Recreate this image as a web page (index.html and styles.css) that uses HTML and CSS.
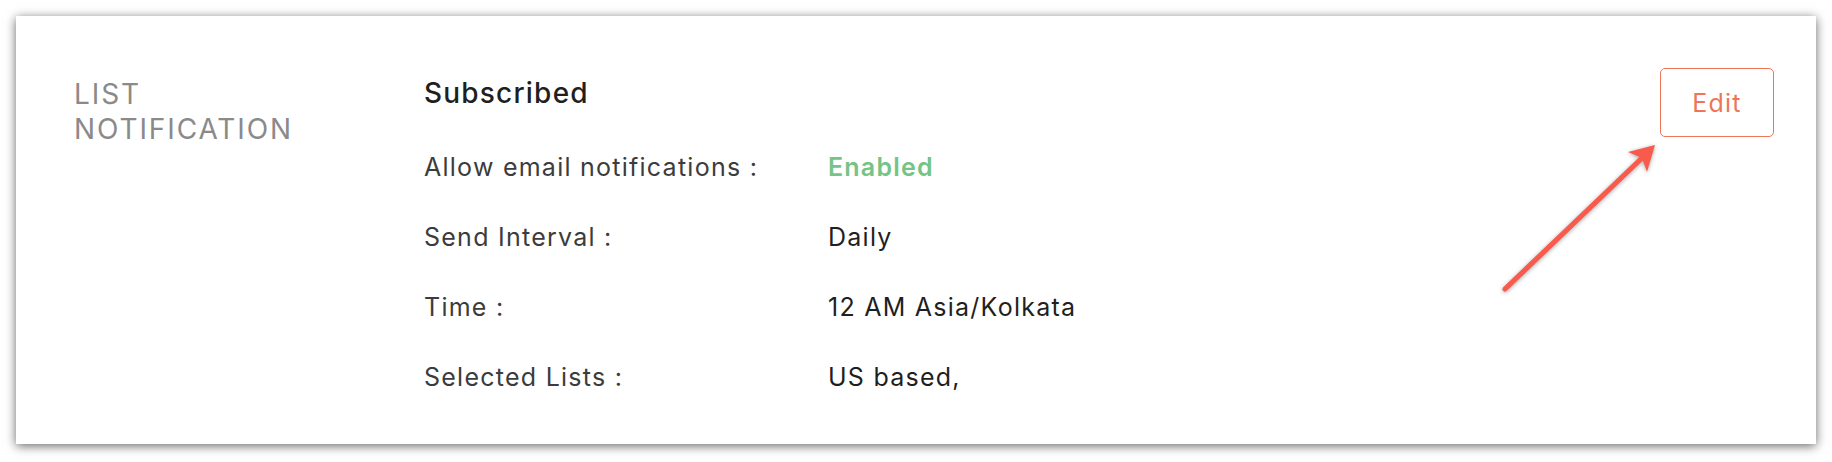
FILE: index.html
```html
<!DOCTYPE html>
<html lang="en">
<head>
<meta charset="utf-8">
<title>List Notification</title>
<link rel="stylesheet" href="styles.css">
</head>
<body>
<section class="card">
  <div class="section-title">LIST<br>NOTIFICATION</div>
  <div class="details">
    <h3 class="details-heading">Subscribed</h3>
    <dl class="rows">
      <dt class="row-label">Allow email notifications :</dt>
      <dd class="row-value enabled">Enabled</dd>
      <dt class="row-label">Send Interval :</dt>
      <dd class="row-value">Daily</dd>
      <dt class="row-label">Time :</dt>
      <dd class="row-value">12 AM Asia/Kolkata</dd>
      <dt class="row-label">Selected Lists :</dt>
      <dd class="row-value">US based,</dd>
    </dl>
  </div>
  <button class="edit-btn" type="button">Edit</button>
  <svg class="arrow" width="170" height="170" viewBox="0 0 170 170" aria-hidden="true">
    <line x1="9" y1="153" x2="146" y2="22" stroke="#f85a4b" stroke-width="5" stroke-linecap="round"/>
    <path d="M159 9 L132 16 L146 22 L151 36 Z" fill="#f85a4b"/>
  </svg>
</section>
</body>
</html>
```

FILE: styles.css
```css
* { box-sizing: border-box; }

html, body {
  margin: 0;
  padding: 0;
  background: #ffffff;
}

body {
  padding: 16px 16px 18px 16px;
  font-family: "Inter", "Liberation Sans", sans-serif;
}

.card {
  position: relative;
  display: flex;
  align-items: flex-start;
  background: #ffffff;
  height: 428px;
  padding: 52px 42px 32px 58px;
  box-shadow: 0 2px 10px rgba(0, 0, 0, 0.6);
}

.section-title {
  width: 350px;
  flex: none;
  padding-top: 9px;
  font-size: 28px;
  line-height: 35px;
  color: #8a8a8a;
  letter-spacing: 1.9px;
}

.details {
  flex: 1;
  padding-top: 8px;
}

.details-heading {
  margin: 0 0 21px 0;
  font-size: 28px;
  line-height: 35px;
  font-weight: 500;
  color: #1f1f1f;
  letter-spacing: 1.2px;
}

.rows {
  margin: 0;
  display: grid;
  grid-template-columns: 404px auto;
  grid-auto-rows: 70px;
  align-items: center;
  font-size: 25px;
  letter-spacing: 1.25px;
}

.row-label {
  color: #3c3c3c;
}

.row-value {
  margin: 0;
  color: #1f1f1f;
}

.row-value.enabled {
  color: #74c486;
  font-weight: 600;
  letter-spacing: 1.2px;
}

.edit-btn {
  flex: none;
  width: 114px;
  height: 69px;
  border: 1.5px solid #ee7656;
  border-radius: 5px;
  background: #ffffff;
  color: #ee7656;
  font-family: inherit;
  font-size: 25px;
  letter-spacing: 1.2px;
}

.arrow {
  position: absolute;
  left: 1480px;
  top: 120px;
  filter: drop-shadow(0 1px 2px rgba(0, 0, 0, 0.35));
}
```
